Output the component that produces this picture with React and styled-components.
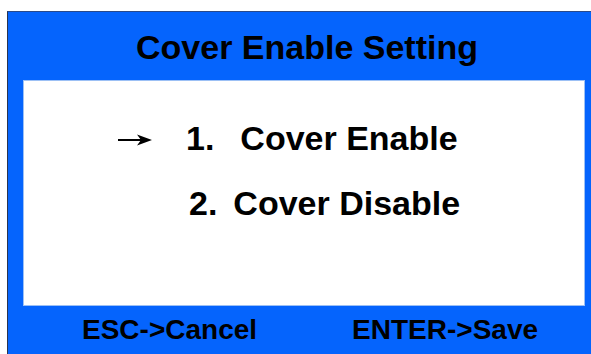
import styled, { createGlobalStyle } from "styled-components";

const GlobalStyle = createGlobalStyle`
  html, body {
    margin: 0;
    padding: 0;
    background: #ffffff;
    overflow: hidden;
  }
  body {
    font-family: "Liberation Sans", Arial, sans-serif;
  }
`;

const Frame = styled.div`
  margin: 11px 0 0 7px;
  width: 584px;
  height: 343px;
  box-sizing: border-box;
  background: #0564fd;
  border-left: 1px solid #2a3550;
  border-top: 1px solid #2a4a8a;
  padding: 0 6px 0 15px;
  display: flex;
  flex-direction: column;
`;

const Title = styled.h1`
  margin: 0;
  height: 68px;
  box-sizing: border-box;
  padding: 3px 0 0 6px;
  line-height: 65px;
  text-align: center;
  font-size: 34px;
  font-weight: 700;
  color: #000;
`;

const Panel = styled.div`
  height: 226px;
  box-sizing: border-box;
  background: #ffffff;
  border: 1px solid #9cc0f5;
  padding-top: 37px;
  display: flex;
  flex-direction: column;
  gap: 25px;
`;

const Row = styled.div`
  display: flex;
  align-items: center;
  height: 40px;
  line-height: 40px;
  padding-left: ${({ $indent }) => $indent}px;
  font-size: 34px;
  font-weight: 700;
  color: #000;
`;

const Pointer = styled.svg`
  width: 34px;
  height: 12px;
  margin-right: 34px;
  margin-top: 4px;
`;

const Num = styled.span`
  margin-right: ${({ $gap }) => $gap}px;
`;

const Footer = styled.div`
  flex: 1;
  display: flex;
  align-items: center;
  gap: 95px;
  padding-left: 59px;
  font-size: 28px;
  font-weight: 700;
  color: #000;
`;

function Arrow() {
  return (
    <Pointer viewBox="0 0 34 12" aria-hidden="true">
      <line x1="0" y1="6" x2="24" y2="6" stroke="#000" strokeWidth="2" />
      <path d="M19 0.5 L34 6 L19 11.5 L23 6 Z" fill="#000" />
    </Pointer>
  );
}

export default function App() {
  return (
    <>
      <GlobalStyle />
      <Frame>
        <Title>Cover Enable Setting</Title>
        <Panel>
          <Row $indent={94}>
            <Arrow />
            <Num $gap={26}>1.</Num>
            <span>Cover Enable</span>
          </Row>
          <Row $indent={165}>
            <Num $gap={16}>2.</Num>
            <span>Cover Disable</span>
          </Row>
        </Panel>
        <Footer>
          <span>ESC-&gt;Cancel</span>
          <span>ENTER-&gt;Save</span>
        </Footer>
      </Frame>
    </>
  );
}
